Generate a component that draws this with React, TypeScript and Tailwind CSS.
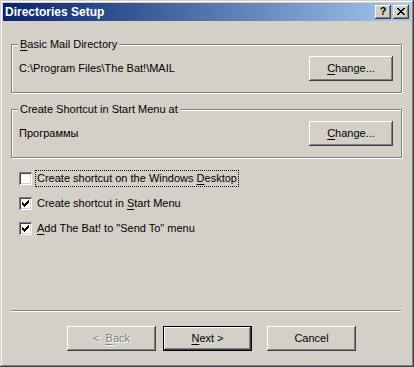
import React from 'react';

const face = 'bg-[#d4d0c8]';
const raised =
  'shadow-[inset_-1px_-1px_0_#404040,inset_1px_1px_0_#ffffff,inset_-2px_-2px_0_#808080]';
const sunken =
  'shadow-[inset_1px_1px_0_#808080,inset_-1px_-1px_0_#ffffff,inset_2px_2px_0_#404040,inset_-2px_-2px_0_#d4d0c8]';

function Acc({ children }: { children: React.ReactNode }) {
  return <span className="underline decoration-1 underline-offset-[2px]">{children}</span>;
}

function CheckMark() {
  // classic 7x7 pixel check glyph
  const px: [number, number][] = [
    [6, 0], [5, 1], [6, 1], [0, 2], [4, 2], [5, 2], [6, 2],
    [0, 3], [1, 3], [3, 3], [4, 3], [5, 3],
    [0, 4], [1, 4], [2, 4], [3, 4], [4, 4],
    [1, 5], [2, 5], [3, 5], [2, 6],
  ];
  return (
    <svg width="7" height="7" viewBox="0 0 7 7" shapeRendering="crispEdges">
      {px.map(([x, y]) => (
        <rect key={`${x}-${y}`} x={x} y={y} width="1" height="1" fill="#000" />
      ))}
    </svg>
  );
}

function CloseGlyph() {
  const rows = ['xx....xx', '.xx..xx.', '..xxxx..', '...xx...', '..xxxx..', '.xx..xx.', 'xx....xx'];
  return (
    <svg width="8" height="7" viewBox="0 0 8 7" shapeRendering="crispEdges">
      {rows.flatMap((r, y) =>
        r.split('').map((c, x) =>
          c === 'x' ? <rect key={`${x}-${y}`} x={x} y={y} width="1" height="1" fill="#000" /> : null,
        ),
      )}
    </svg>
  );
}

function Checkbox({ checked }: { checked: boolean }) {
  return (
    <div className={`flex h-[13px] w-[13px] shrink-0 items-center justify-center bg-white ${sunken}`}>
      {checked && <CheckMark />}
    </div>
  );
}

function Button({
  children,
  isDefault,
  disabled,
  className = '',
}: {
  children: React.ReactNode;
  isDefault?: boolean;
  disabled?: boolean;
  className?: string;
}) {
  return (
    <div
      className={`flex items-center justify-center ${face} ${raised} ${
        isDefault ? 'border border-black' : ''
      } ${disabled ? 'text-[#808080] [text-shadow:1px_1px_0_#ffffff]' : 'text-black'} ${className}`}
    >
      {children}
    </div>
  );
}

function GroupBox({ label, children }: { label: React.ReactNode; children: React.ReactNode }) {
  return (
    <div className="relative mr-[1px] flex h-[49px] items-center border border-[#808080] pl-[7px] pr-[8px] shadow-[1px_1px_0_#ffffff,inset_1px_1px_0_#ffffff]">
      <div className={`absolute left-[6px] top-[-7px] px-[2px] leading-[13px] ${face}`}>{label}</div>
      {children}
    </div>
  );
}

export default function App() {
  return (
    <div
      className={`flex h-[367px] w-[414px] flex-col p-[3px] text-[11px] leading-[13px] text-black ${face} shadow-[inset_-1px_-1px_0_#404040,inset_1px_1px_0_#d4d0c8,inset_-2px_-2px_0_#808080,inset_2px_2px_0_#ffffff]`}
      style={{ fontFamily: '"Liberation Sans", Arial, sans-serif' }}
    >
      <div className="flex h-[18px] shrink-0 items-center bg-linear-to-r from-[#0a246a] to-[#a6caf0] pl-[2px] pr-[2px]">
        <span className="flex-1 text-[12px] font-bold text-white">Directories Setup</span>
        <div className="flex gap-[2px]">
          <div className={`flex h-[14px] w-[16px] items-center justify-center pb-[1px] text-[11px] font-bold leading-none ${face} ${raised}`}>
            ?
          </div>
          <div className={`flex h-[14px] w-[16px] items-center justify-center pb-[1px] ${face} ${raised}`}>
            <CloseGlyph />
          </div>
        </div>
      </div>

      <div className="flex flex-1 flex-col px-[8px]">
        <div className="mt-[23px]">
          <GroupBox label={<><Acc>B</Acc>asic Mail Directory</>}>
            <span className="flex-1">C:\Program Files\The Bat!\MAIL</span>
            <Button className="h-[25px] w-[84px]">
              <Acc>C</Acc>hange...
            </Button>
          </GroupBox>
        </div>

        <div className="mt-[16px]">
          <GroupBox label="Create Shortcut in Start Menu at">
            <span className="flex-1">Программы</span>
            <Button className="h-[25px] w-[84px]">
              <Acc>C</Acc>hange...
            </Button>
          </GroupBox>
        </div>

        <div className="mt-[11px] flex flex-col gap-[7px] pl-[8px]">
          <div className="flex h-[18px] items-center">
            <Checkbox checked={false} />
            <span className="ml-[3px] border border-dotted border-black px-[1px] py-[1px]">
              Create shortcut on the Windows <Acc>D</Acc>esktop
            </span>
          </div>
          <div className="flex h-[18px] items-center">
            <Checkbox checked />
            <span className="ml-[5px]">
              Create shortcut in <Acc>S</Acc>tart Menu
            </span>
          </div>
          <div className="flex h-[18px] items-center">
            <Checkbox checked />
            <span className="ml-[5px]">
              <Acc>A</Acc>dd The Bat! to "Send To" menu
            </span>
          </div>
        </div>

        <div className="mt-auto mr-[2px] h-[2px] border-t border-b border-t-[#808080] border-b-white" />

        <div className="mb-[13px] mt-[14px] flex pl-[56px]">
          <Button disabled className="h-[25px] w-[89px]">
            <span>&lt;&nbsp;&nbsp;<Acc>B</Acc>ack</span>
          </Button>
          <Button isDefault className="ml-[7px] h-[25px] w-[89px]">
            <span>
              <Acc>N</Acc>ext &gt;
            </span>
          </Button>
          <Button className="ml-[15px] h-[25px] w-[89px]">Cancel</Button>
        </div>
      </div>
    </div>
  );
}
